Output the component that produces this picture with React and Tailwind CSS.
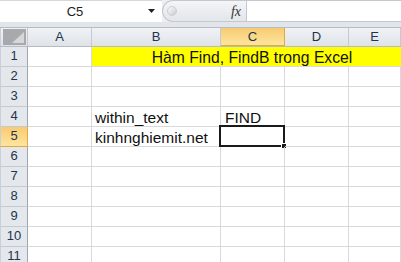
import React from 'react'

const cols = ['A', 'B', 'C', 'D', 'E']
const widths = ['w-[64px]', 'w-[129px]', 'w-[64px]', 'w-[64px]', 'flex-1']

function ColHeader({ label, i }) {
  const sel = label === 'C'
  return (
    <div className={`${widths[i]} shrink-0 h-full flex items-center justify-center border-r ${sel ? 'bg-gradient-to-b from-[#f8cb72] to-[#fee59c] border-[#e2a843] border-b border-b-[#e2a843]' : 'border-[#c5cad1]'}`}>
      {label}
    </div>
  )
}

function RowHeader({ n }) {
  const sel = n === 5
  return (
    <div className={`w-[28px] shrink-0 h-full flex items-end justify-center pb-[1px] text-[13px] text-[#22344b] border-r border-b ${sel ? 'bg-gradient-to-b from-[#f8cb72] to-[#fee59c] border-[#e2a843]' : 'bg-[#e4e8ed] border-b-[#c5cad1] border-r-[#9ea6af]'} border-l border-l-[#c9d0d8]`}>
      {n}
    </div>
  )
}

function Cell({ w, children, className = '', sel }) {
  return (
    <div className={`${w} shrink-0 h-full relative flex items-end border-r border-b border-[#d9d9d9] whitespace-nowrap leading-[17px] pl-[3px] ${className}`}>
      {children}
      {sel && (
        <div className="absolute -left-[2px] -top-[2px] w-[66px] h-[22px] border-2 border-[#1a1a1a]">
          <div className="absolute -right-[4px] -bottom-[4px] w-[6px] h-[6px] bg-[#1a1a1a] border border-white" />
        </div>
      )}
    </div>
  )
}

export default function App() {
  const data = {
    4: { B: 'within_text', C: 'FIND' },
    5: { B: 'kinhnghiemit.net' },
  }
  const rows = [2, 3, 4, 5, 6, 7, 8, 9, 10, 11]

  return (
    <div className="w-[401px] h-[262px] overflow-hidden bg-white" style={{ fontFamily: '"Liberation Sans", Arial, sans-serif' }}>
      {/* formula bar */}
      <div className="h-[22px] flex bg-[#eceef2]">
        <div className="w-[162px] bg-white flex items-center border-t border-[#d4d8de]">
          <div className="flex-1 text-center text-[13px] text-[#222] pl-[2px]">C5</div>
          <svg width="8" height="5" viewBox="0 0 8 5" className="mr-[6px]"><path d="M0 0h7L3.5 4z" fill="#222" /></svg>
        </div>
        <div className="w-[84px] flex items-center rounded-l-[11px] border border-r-0 border-[#c3c8cf] bg-gradient-to-b from-[#f3f5f7] to-[#e3e6ea]">
          <div className="w-[10px] h-[10px] ml-[4px] rounded-full bg-gradient-to-br from-[#fafafa] to-[#c8ccd2] border border-[#c9ced4]" />
          <div className="flex-1" />
          <span className="mr-[5px] text-[14px] italic text-[#333]" style={{ fontFamily: '"Liberation Serif", serif' }}>fx</span>
        </div>
        <div className="flex-1 bg-white border border-[#c3c8cf] border-r-0" />
      </div>
      <div className="h-[5px] bg-[#e2e6eb]" />

      {/* column headers */}
      <div className="h-[20px] flex text-[13px] text-[#22344b] bg-gradient-to-b from-[#f0f2f5] to-[#dfe3e8] border-t border-b border-[#b5bcc5]">
        <div className="w-[28px] shrink-0 h-full flex border-r border-[#c5cad1] border-l border-l-[#c9d0d8]">
          <div className="ml-[2px] mt-[1px] w-[23px] h-[16px] bg-[#a7a9ac] relative">
            <svg width="23" height="16" viewBox="0 0 23 16" className="absolute inset-0"><path d="M21 3L21 14L9 14Z" fill="#d6d7d9" /></svg>
          </div>
        </div>
        {cols.map((c, i) => <ColHeader key={c} label={c} i={i} />)}
      </div>

      {/* row 1: B1:E1 merged */}
      <div className="h-[20px] flex text-[15.5px] text-[#111]">
        <RowHeader n={1} />
        <Cell w="w-[64px]" />
        <div className="w-[320px] shrink-0 h-full flex items-end justify-center bg-[#ffff00] border-b border-[#d9d9d9] leading-[17px] whitespace-nowrap text-[15.7px]">
          Hàm Find, FindB trong Excel
        </div>
      </div>

      {rows.map(n => (
        <div key={n} className="h-[20px] flex text-[15.5px] text-[#111]">
          <RowHeader n={n} />
          {cols.map((c, i) => (
            <Cell key={c} w={widths[i]} sel={n === 5 && c === 'C'} className={c === 'C' ? 'pl-[4px]' : ''}>
              {data[n]?.[c]}
            </Cell>
          ))}
        </div>
      ))}
    </div>
  )
}
